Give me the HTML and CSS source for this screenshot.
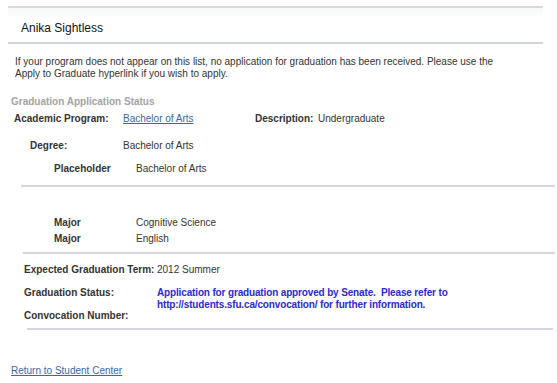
FILE: index.html
```html
<!DOCTYPE html>
<html lang="en">
<head>
  <meta charset="UTF-8">
  <title>Graduation Application Status</title>
  <link rel="stylesheet" href="styles.css">
</head>
<body>
  <div id="name-bar">
    <span class="student-name">Anika Sightless</span>
  </div>

  <p class="intro">
    If your program does not appear on this list, no application for graduation has been received. Please use the<br>
    Apply to Graduate hyperlink if you wish to apply.
  </p>

  <div class="section-title">Graduation Application Status</div>

  <div class="row program-row">
    <span class="label program-label">Academic Program:</span>
    <a class="link program-link" href="#">Bachelor of Arts</a>
    <span class="label desc-label">Description:</span>
    <span class="value">Undergraduate</span>
  </div>

  <div class="row degree-row">
    <span class="label degree-label">Degree:</span>
    <span class="value">Bachelor of Arts</span>
  </div>

  <div class="row plan-row">
    <span class="label plan-label">Placeholder</span>
    <span class="value">Bachelor of Arts</span>
  </div>

  <div class="divider divider-one"></div>

  <div class="majors">
    <div class="major-row">
      <span class="label plan-label">Major</span>
      <span class="value">Cognitive Science</span>
    </div>
    <div class="major-row">
      <span class="label plan-label">Major</span>
      <span class="value">English</span>
    </div>
  </div>

  <div class="divider divider-two"></div>

  <div class="row term-row">
    <span class="label term-label">Expected Graduation Term:</span>
    <span class="value">2012 Summer</span>
  </div>

  <div class="status-grid">
    <div class="status-labels">
      <span class="label">Graduation Status:</span>
      <span class="label">Convocation Number:</span>
    </div>
    <div class="status-text">
      Application for graduation approved by Senate.&nbsp; Please refer to<br>
      http://students.sfu.ca/convocation/ for further information.
    </div>
  </div>

  <div class="divider divider-three"></div>

  <a class="link return-link" href="#">Return to Student Center</a>
</body>
</html>
```

FILE: styles.css
```css
body {
  margin: 0;
  font-family: "Liberation Sans", Arial, sans-serif;
  font-size: 10px;
  line-height: 12px;
  color: #333333;
  background-color: #ffffff;
}

#name-bar {
  margin: 6px 0 0 8px;
  width: 522px;
  height: 29px;
  padding: 5px 0 0 13px;
  border-top: 2px solid #d6d9e0;
  border-bottom: 2px solid #d0d4dc;
  background: linear-gradient(#f6f7f9, #ffffff 30%);
  display: flex;
  align-items: center;
}

.student-name {
  font-size: 12px;
  color: #111111;
}

.intro {
  margin: 12px 0 0 15px;
  line-height: 12px;
}

.section-title {
  margin: 16px 0 0 11px;
  font-weight: bold;
  color: #a3a3a3;
}

.row {
  display: flex;
  align-items: baseline;
}

.label {
  font-weight: bold;
  color: #333333;
}

.link {
  color: #3a66aa;
  text-decoration: underline;
}

.program-row {
  margin-top: 5px;
  padding-left: 14px;
}

.program-label {
  width: 109px;
}

.program-link {
  width: 132px;
}

.desc-label {
  width: 63px;
}

.degree-row {
  margin-top: 15px;
  padding-left: 30px;
}

.degree-label {
  width: 93px;
}

.plan-row {
  margin-top: 11px;
  padding-left: 54px;
}

.plan-label {
  width: 82px;
}

.divider {
  height: 2px;
  background-color: #d3d6dd;
}

.divider-one {
  margin: 10px 2px 0 21px;
}

.majors {
  margin-top: 28px;
  padding-left: 54px;
}

.major-row {
  display: flex;
  line-height: 16px;
}

.divider-two {
  margin: 5px 2px 0 23px;
}

.term-row {
  margin-top: 10px;
  padding-left: 24px;
}

.term-label {
  width: 133px;
}

.status-grid {
  display: grid;
  grid-template-columns: 133px 1fr;
  margin-top: 11px;
  padding-left: 24px;
}

.status-labels {
  display: flex;
  flex-direction: column;
  gap: 11px;
}

.status-text {
  font-weight: bold;
  color: #2a2ad4;
  letter-spacing: -0.15px;
}

.divider-three {
  margin: 6px 4px 0 27px;
}

.return-link {
  display: inline-block;
  margin: 35px 0 0 11px;
}
```
